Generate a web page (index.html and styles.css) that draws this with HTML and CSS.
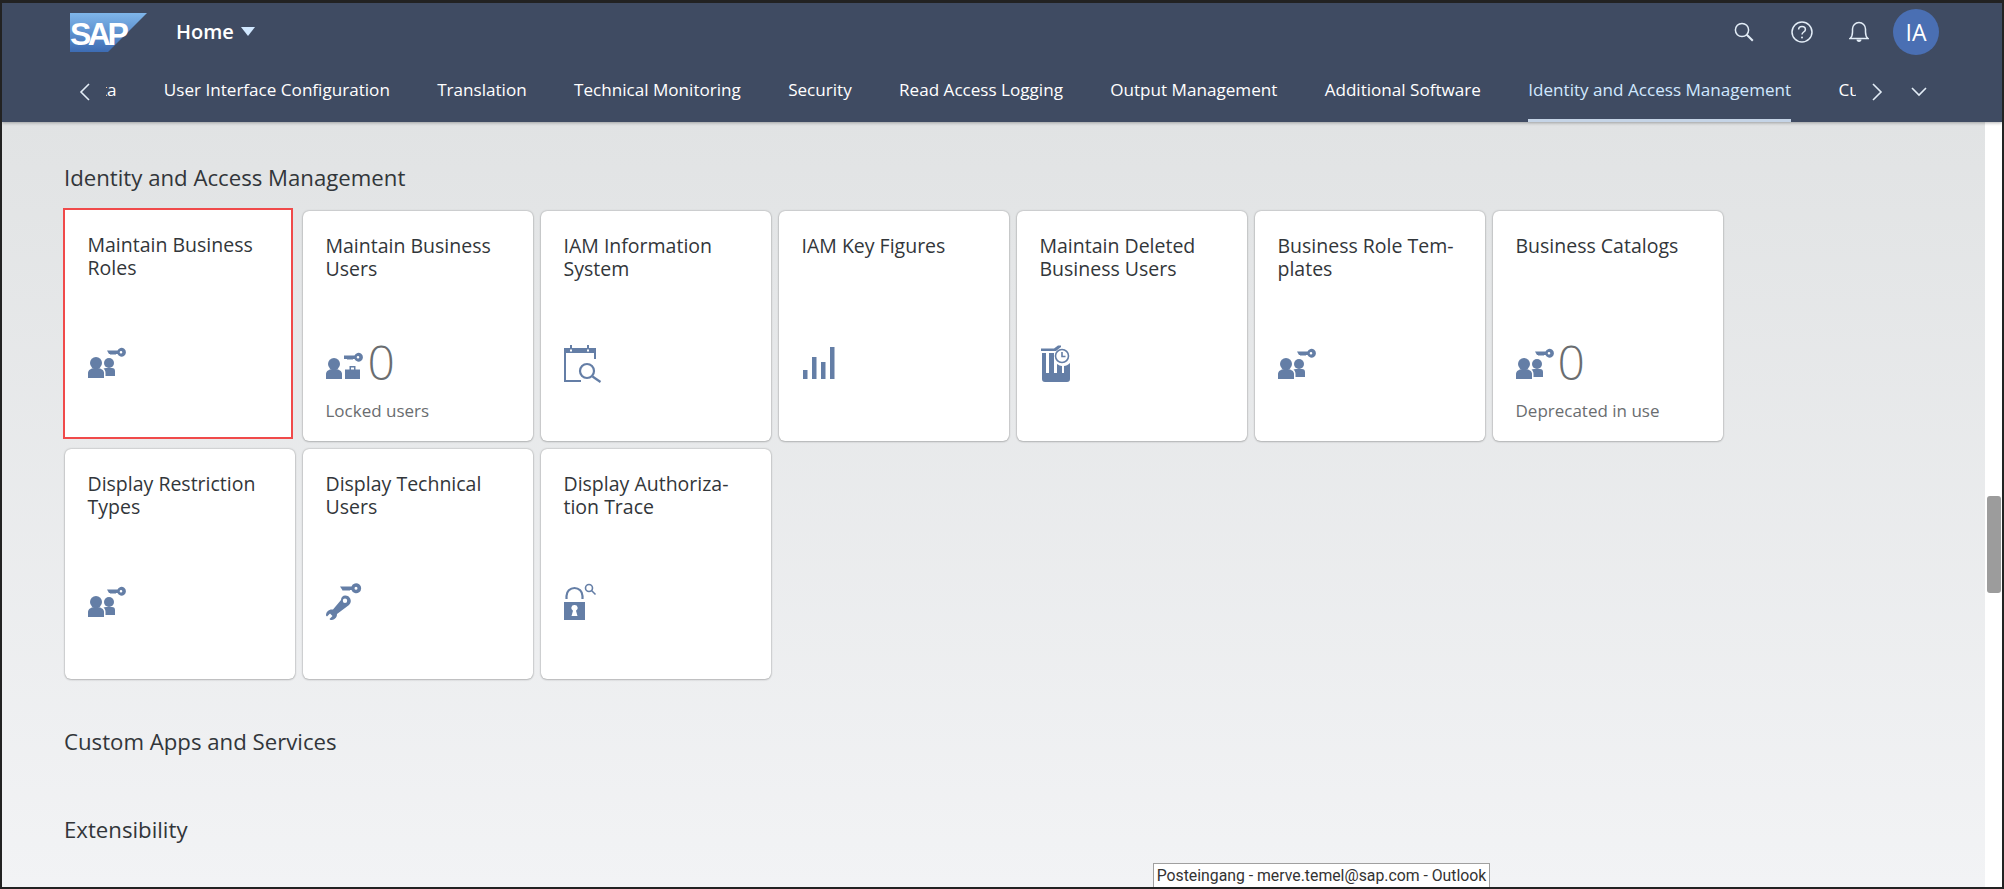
FILE: index.html
```html
<!DOCTYPE html>
<html lang="en">
<head>
    <meta charset="UTF-8">
    <title>Home</title>
    <link rel="stylesheet" href="styles.css">
</head>
<body>
    <svg class="sprites" width="0" height="0">
        <symbol id="people-key" viewBox="0 0 40 40">
            <circle cx="8" cy="19" r="6"/>
            <path d="M0 34v-5c0-3 3-5 8-5s8 2 8 5v5z"/>
            <circle cx="21" cy="19" r="5"/>
            <path d="M18 24h6c2 0 3 1 3 3v5H17.500v-3c0-2-1-4-2-4.500z"/>
            <path fill-rule="evenodd" d="M19 6.500h10.500a4.400 4.400 0 1 1 0 3.500H28l-1 1-1-1-1 1-1-1-1 1-1-1h-1zM33 6.900a1.300 1.300 0 1 0 0 2.600 1.300 1.300 0 0 0 0-2.600z"/>
        </symbol>
    </svg>

    <div class="window">
        <header class="shell">
            <div class="topbar">
                <svg class="logo" width="77" height="39" viewBox="0 0 77 39">
                    <defs>
                        <linearGradient id="sapblue" x1="0" y1="0" x2="0" y2="1">
                            <stop offset="0" stop-color="#7fb6ea"/>
                            <stop offset="1" stop-color="#3d6cb3"/>
                        </linearGradient>
                    </defs>
                    <polygon points="0,0 77,0 38,39 0,39" fill="url(#sapblue)"/>
                    <text x="0" y="32" class="logo-text">SAP</text>
                </svg>
                <div class="home">Home <span class="caret"></span></div>
                <div class="actions">
                    <svg class="action search" width="20" height="20" viewBox="0 0 20 20">
                        <circle cx="8" cy="8" r="6.6"/>
                        <path d="M12.800 12.800l6 6" stroke-width="2"/>
                    </svg>
                    <svg class="action help" width="22" height="22" viewBox="0 0 22 22">
                        <circle cx="11" cy="11" r="10"/>
                        <path d="M7.600 8.600c0-2 1.500-3.200 3.400-3.200s3.400 1.200 3.400 3c0 2.600-3.400 2.600-3.400 5.200"/>
                        <circle class="dot" cx="11" cy="16.500" r="1"/>
                    </svg>
                    <svg class="action bell" width="20" height="22" viewBox="0 0 20 22">
                        <path d="M1 17.500c2-1.500 2.500-3 2.500-6.500v-3c0-3.500 2.800-6.500 6.500-6.500s6.500 3 6.500 6.500v3c0 3.500.5 5 2.500 6.500z"/>
                        <path class="dot" d="M7.500 18.500h5c0 1.500-1 2.500-2.500 2.500s-2.500-1-2.500-2.500z"/>
                    </svg>
                    <div class="avatar">IA</div>
                </div>
            </div>
            <nav class="tabbar">
                <svg class="chev chev-left" width="12" height="20" viewBox="0 0 12 20"><path d="M10 2L2 10l8 8"/></svg>
                <div class="tabs">
                    <div class="tabs-inner">
                        <a class="tab">Data</a>
                        <a class="tab">User Interface Configuration</a>
                        <a class="tab">Translation</a>
                        <a class="tab">Technical Monitoring</a>
                        <a class="tab">Security</a>
                        <a class="tab">Read Access Logging</a>
                        <a class="tab">Output Management</a>
                        <a class="tab">Additional Software</a>
                        <a class="tab active">Identity and Access Management</a>
                        <a class="tab">Custom Apps and Services</a>
                    </div>
                </div>
                <svg class="chev chev-right" width="12" height="20" viewBox="0 0 12 20"><path d="M2 2l8 8-8 8"/></svg>
                <svg class="chev chev-down" width="18" height="11" viewBox="0 0 18 11"><path d="M2 2l7 7 7-7"/></svg>
            </nav>
        </header>

        <div class="body-row">
            <main class="content">
                <h2 class="section-title first">Identity and Access Management</h2>
                <div class="tiles">
                    <div class="tile selected">
                        <div class="tile-title">Maintain Business Roles</div>
                        <div class="tile-kpi"><svg class="ico"><use href="#people-key"/></svg></div>
                    </div>
                    <div class="tile">
                        <div class="tile-title">Maintain Business Users</div>
                        <div class="tile-kpi">
                            <svg class="ico" viewBox="0 0 40 40">
                                <circle cx="8" cy="19" r="6"/>
                                <path d="M0 34v-5c0-3 3-5 8-5s8 2 8 5v5z"/>
                                <path fill-rule="evenodd" d="M19 24.500h4.500v-3.500h6v3.500H34V34H19zM25 22.500v2h3v-2z"/>
                                <path fill-rule="evenodd" d="M18 10.500h10.500a4.400 4.400 0 1 1 0 3.500H27l-1 1-1-1-1 1-1-1-1 1-1-1h-3zM32 10.900a1.300 1.300 0 1 0 0 2.600 1.300 1.300 0 0 0 0-2.600z"/>
                            </svg>
                            <span class="kpi-num">0</span>
                        </div>
                        <div class="tile-foot">Locked users</div>
                    </div>
                    <div class="tile">
                        <div class="tile-title">IAM Information System</div>
                        <div class="tile-kpi">
                            <svg class="ico" viewBox="0 0 40 40">
                                <path fill-rule="evenodd" d="M0 3h6V0h2v3h15V0h2v3h7v11h-2V8H2v27h15v2H0zM6 4.500v2h2v-2zM23 4.500v2h2v-2z"/>
                                <path class="line" d="M28.500 31.500l8 5.500"/>
                                <circle class="line" cx="23" cy="26" r="7"/>
                            </svg>
                        </div>
                    </div>
                    <div class="tile">
                        <div class="tile-title">IAM Key Figures</div>
                        <div class="tile-kpi">
                            <svg class="ico" viewBox="0 0 40 40">
                                <path d="M1 25h4.500v9H1zM10 12h4.500v22H10zM19 17h4.500v17H19zM28 2h4.500v32H28z"/>
                            </svg>
                        </div>
                    </div>
                    <div class="tile">
                        <div class="tile-title">Maintain Deleted Business Users</div>
                        <div class="tile-kpi">
                            <svg class="ico" viewBox="0 0 40 40">
                                <path d="M1 3.500h13l4-3h3v1.500l-5 4H1z"/>
                                <path d="M2 8h4v20h3V8h5v20h3V19c2 1 3 2 5 2v7h2v-7c2 0 4-1 6-3v16c0 2-1 3-3 3H5c-2 0-3-1-3-3z"/>
                                <circle class="line thin" cx="22" cy="11" r="6.500"/>
                                <path class="line thin" d="M22 7v4.500h3.500"/>
                            </svg>
                        </div>
                    </div>
                    <div class="tile">
                        <div class="tile-title">Business Role Tem&shy;plates</div>
                        <div class="tile-kpi"><svg class="ico"><use href="#people-key"/></svg></div>
                    </div>
                    <div class="tile">
                        <div class="tile-title">Business Catalogs</div>
                        <div class="tile-kpi">
                            <svg class="ico"><use href="#people-key"/></svg>
                            <span class="kpi-num">0</span>
                        </div>
                        <div class="tile-foot">Deprecated in use</div>
                    </div>
                    <div class="tile">
                        <div class="tile-title">Display Restriction Types</div>
                        <div class="tile-kpi"><svg class="ico"><use href="#people-key"/></svg></div>
                    </div>
                    <div class="tile">
                        <div class="tile-title">Display Technical Users</div>
                        <div class="tile-kpi">
                            <svg class="ico" viewBox="0 0 40 40">
                                <path fill-rule="evenodd" d="M14 3.500h11.500a5 5 0 1 1 0 3.500H24l-1 1-1-1-1 1-1-1-1 1-1-1-1 1zM30 3.800a1.500 1.500 0 1 0 0 3 1.500 1.500 0 0 0 0-3z"/>
                                <path fill-rule="evenodd" d="M19 12.500a5.500 5.500 0 0 1 4 9.500L11 31c0 4-3 6-6.500 6l-1-1 3-3-2.500-2.500-3 3-1-1c0-4 3-6.500 7-6L15 17c0-3 2-4.500 4-4.500zM19 15.500a2.200 2.200 0 1 0 0 4.400 2.200 2.200 0 0 0 0-4.400z"/>
                            </svg>
                        </div>
                    </div>
                    <div class="tile">
                        <div class="tile-title">Display Authoriza&shy;tion Trace</div>
                        <div class="tile-kpi">
                            <svg class="ico" viewBox="0 0 40 40">
                                <path class="line" d="M2.500 16v-3a8 8 0 0 1 16 0v3" stroke-width="3"/>
                                <path fill-rule="evenodd" d="M0 19h21v18H0zM10.500 22a3 3 0 0 0-1.500 5.700L7.500 33h6L12 27.700A3 3 0 0 0 10.500 22z"/>
                                <circle class="line thin" cx="25" cy="5" r="3.500"/>
                                <path class="line thin" d="M27.500 7.500l4 4"/>
                            </svg>
                        </div>
                    </div>
                </div>
                <h2 class="section-title">Custom Apps and Services</h2>
                <h2 class="section-title">Extensibility</h2>
            </main>
            <div class="scrollbar"><div class="thumb"></div></div>
        </div>

        <div class="tooltip">Posteingang - merve.temel@sap.com - Outlook</div>
    </div>
</body>
</html>
```

FILE: styles.css
```css
body {
    margin: 0;
    font-family: "Open Sans", "Noto Sans", Arial, sans-serif;
    color: #32363a;
    background: #fff;
}

.sprites {
    position: absolute;
}

.window {
    position: relative;
    height: 889px;
    box-sizing: border-box;
    border-top: 3px solid #222;
    border-left: 2px solid #222;
    border-right: 2px solid #222;
    border-bottom: 2px solid #222;
    display: flex;
    flex-direction: column;
    overflow: hidden;
}

/* shell header */
.shell {
    height: 119px;
    flex: none;
    background-color: #3f4b62;
    box-shadow: 0 1px 3px rgba(0, 0, 0, 0.3);
    position: relative;
    color: #fff;
}

.topbar {
    height: 58px;
    display: flex;
    align-items: center;
    padding-left: 68px;
    padding-right: 63px;
}

.logo {
    margin-right: 29px;
}

.logo-text {
    font-family: "Liberation Sans", Arial, sans-serif;
    font-weight: bold;
    font-size: 32px;
    letter-spacing: -3.5px;
    fill: #fff;
}

.home {
    font-size: 20px;
    font-weight: 600;
    display: flex;
    align-items: center;
    gap: 7px;
    margin-top: -2px;
}

.caret {
    width: 0;
    height: 0;
    border-left: 7px solid transparent;
    border-right: 7px solid transparent;
    border-top: 9px solid #d1e8ff;
}

.actions {
    margin-left: auto;
    display: flex;
    align-items: center;
}

.action {
    fill: none;
    stroke: #e3edf7;
    stroke-width: 1.5;
}

.action .dot {
    fill: #e3edf7;
    stroke: none;
}

.search {
    margin-right: 37px;
}

.help {
    margin-right: 36px;
}

.bell {
    margin-right: 24px;
}

.avatar {
    width: 46px;
    height: 46px;
    border-radius: 50%;
    background-color: #4a6fb3;
    font-size: 23px;
    display: flex;
    align-items: center;
    justify-content: center;
}

/* tabs */
.tabbar {
    height: 61px;
    display: flex;
    align-items: center;
}

.chev {
    flex: none;
    fill: none;
    stroke: #e3edf7;
    stroke-width: 1.6;
}

.chev-left {
    margin-left: 77px;
    margin-right: 15px;
}

.tabs {
    width: 1750px;
    height: 100%;
    overflow: hidden;
}

.tabs-inner {
    display: flex;
    gap: 47.3px;
    height: 100%;
    margin-left: -27px;
}

.tab {
    flex: none;
    font-size: 17.1px;
    line-height: 58px;
    height: 58px;
    white-space: nowrap;
    color: #fff;
}

.tab.active {
    color: #d1e8ff;
    border-bottom: 3px solid #c5d4e6;
}

.chev-right {
    margin-left: 15px;
    margin-right: 27px;
}

/* page body */
.body-row {
    flex: 1;
    display: flex;
    min-height: 0;
}

.content {
    flex: 1;
    padding-left: 63px;
    background: linear-gradient(#e1e3e4, #f2f3f5);
}

.section-title {
    margin: 0 0 0 -1px;
    font-size: 22.2px;
    font-weight: 400;
    line-height: 30px;
    padding-top: 48px;
    padding-bottom: 10px;
}

.section-title.first {
    padding-top: 41px;
    padding-bottom: 18px;
}

.tiles {
    display: grid;
    grid-template-columns: repeat(7, 230px);
    grid-auto-rows: 230px;
    gap: 8px;
}

.tile {
    background-color: #fff;
    border-radius: 6px;
    box-shadow: 0 0 2px rgba(0, 0, 0, 0.35), 0 1px 2px rgba(0, 0, 0, 0.15);
    padding: 23px 22.5px 0;
    box-sizing: border-box;
    display: flex;
    flex-direction: column;
}

.tile.selected {
    width: 230px;
    height: 231px;
    margin: -3px 0 0 -2px;
    border: 2px solid #f04a4a;
    border-radius: 0;
    box-shadow: none;
}

.tile-title {
    font-size: 19.5px;
    line-height: 23px;
    height: 46px;
    hyphens: manual;
}

.tile-kpi {
    margin-top: 65px;
    height: 40px;
    display: flex;
    align-items: flex-end;
    gap: 4px;
}

.ico {
    width: 40px;
    height: 40px;
    flex: none;
    fill: #647ea6;
}

.ico .line {
    fill: none;
    stroke: #647ea6;
    stroke-width: 2.2;
}

.ico .thin {
    stroke-width: 1.6;
}

.kpi-num {
    font-size: 48px;
    line-height: 50px;
    font-weight: 300;
    color: #6a6d70;
    margin-left: -2px;
    margin-bottom: -2px;
}

.tile-foot {
    margin-top: 14px;
    font-size: 17px;
    color: #6a6d70;
}

/* scrollbar */
.scrollbar {
    width: 17px;
    flex: none;
    background-color: #fff;
    box-sizing: border-box;
    padding: 374px 1px 0 2px;
}

.thumb {
    height: 97px;
    background-color: #9c9c9c;
    border-radius: 3px;
}

/* native tooltip over the page */
.tooltip {
    position: absolute;
    left: 1151px;
    bottom: 0;
    width: 337px;
    height: 24px;
    box-sizing: border-box;
    background-color: #fff;
    border: 1px solid #a0a0a0;
    border-bottom: 0;
    font-family: Roboto, Arial, sans-serif;
    font-size: 15.8px;
    line-height: 23px;
    text-align: center;
    white-space: nowrap;
    color: #333;
}
```
